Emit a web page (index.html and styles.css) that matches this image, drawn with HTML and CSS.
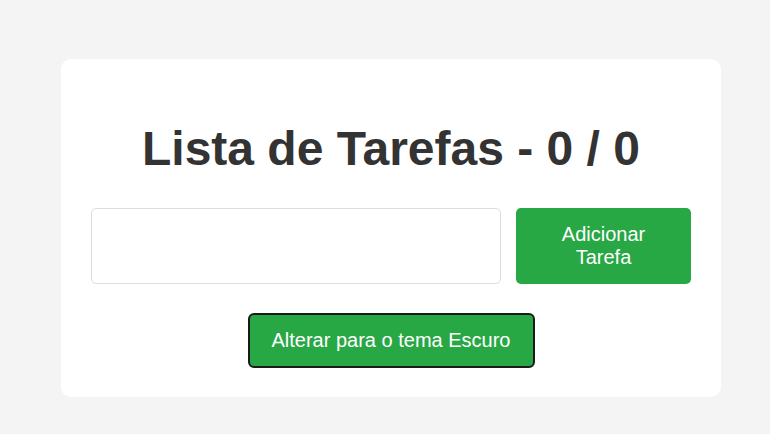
FILE: index.html
```html
<!DOCTYPE html>
<html lang="pt">
<head>
<meta charset="utf-8">
<title>Lista de Tarefas</title>
<link rel="stylesheet" href="styles.css">
</head>
<body>
<div class="card">
  <h1 class="title">Lista de Tarefas - 0 / 0</h1>
  <div class="row">
    <input class="task-input" type="text">
    <button class="add-btn">Adicionar Tarefa</button>
  </div>
  <div class="theme-wrap">
    <button class="theme-btn">Alterar para o tema Escuro</button>
  </div>
</div>
</body>
</html>
```
FILE: styles.css
```css
html, body {
  margin: 0;
  padding: 0;
  background: #f4f4f4;
  font-family: "Liberation Sans", Arial, sans-serif;
}
body {
  padding: 59px 0 0 61px;
}
.card {
  width: 660px;
  box-sizing: border-box;
  background: #fff;
  border-radius: 10px;
  padding: 30px 30px 29px;
}
.title {
  margin: 32px 0;
  font-size: 48px;
  font-weight: bold;
  color: #333;
  text-align: center;
  line-height: 1.15;
}
.row {
  display: flex;
  gap: 15px;
  align-items: stretch;
}
.task-input {
  flex: 1;
  min-width: 0;
  border: 1px solid #ddd;
  border-radius: 5px;
  padding: 10px;
  font-size: 20px;
  font-family: inherit;
  outline: none;
}
.add-btn {
  width: 175px;
  box-sizing: border-box;
  flex: none;
  background: #28a745;
  color: #fff;
  border: none;
  border-radius: 5px;
  padding: 15px 20px;
  font-size: 20px;
  line-height: 23px;
  font-family: inherit;
}
.theme-wrap {
  display: flex;
  justify-content: center;
  margin-top: 29px;
}
.theme-btn {
  background: #28a745;
  color: #fff;
  border: 2px solid #1a1a1a;
  border-radius: 6px;
  padding: 14px 22px;
  font-size: 20px;
  line-height: 23px;
  font-family: inherit;
}
```
